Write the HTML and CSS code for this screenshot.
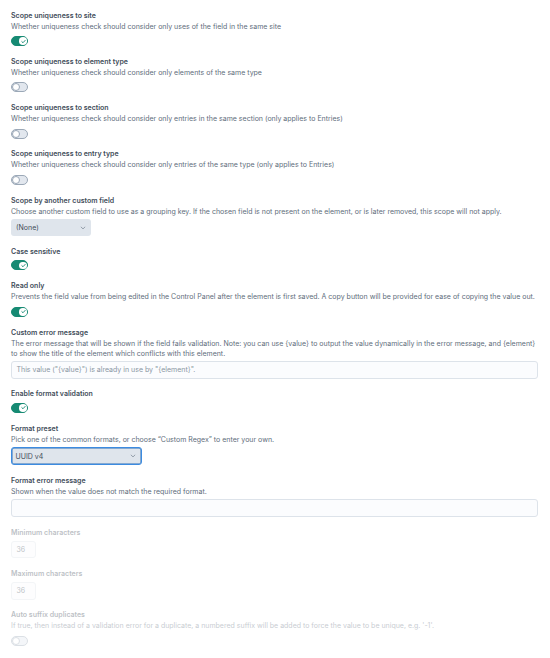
FILE: index.html
```html
<!DOCTYPE html>
<html lang="en">
<head>
<meta charset="utf-8">
<title>Field settings</title>
<link rel="stylesheet" href="styles.css">
</head>
<body>
<div class="page">
  <div class="field">
    <div class="label">Scope uniqueness to site</div>
    <div class="instructions">Whether uniqueness check should consider only uses of the field in the same site</div>
    <span class="toggle on"><span class="knob"><svg viewBox="0 0 10 10"><path d="M2.6 5.2 L4.3 6.8 L7.4 3.4"/></svg></span></span>
  </div>
  <div class="field">
    <div class="label">Scope uniqueness to element type</div>
    <div class="instructions">Whether uniqueness check should consider only elements of the same type</div>
    <span class="toggle"><span class="knob"></span></span>
  </div>
  <div class="field">
    <div class="label">Scope uniqueness to section</div>
    <div class="instructions">Whether uniqueness check should consider only entries in the same section (only applies to Entries)</div>
    <span class="toggle"><span class="knob"></span></span>
  </div>
  <div class="field">
    <div class="label">Scope uniqueness to entry type</div>
    <div class="instructions">Whether uniqueness check should consider only entries of the same type (only applies to Entries)</div>
    <span class="toggle"><span class="knob"></span></span>
  </div>
  <div class="field">
    <div class="label">Scope by another custom field</div>
    <div class="instructions">Choose another custom field to use as a grouping key. If the chosen field is not present on the element, or is later removed, this scope will not apply.</div>
    <div class="select small"><span>(None)</span><svg class="chev" viewBox="0 0 8 8"><path d="M1.5 2.8 L4 5.2 L6.5 2.8"/></svg></div>
  </div>
  <div class="field">
    <div class="label">Case sensitive</div>
    <span class="toggle on"><span class="knob"><svg viewBox="0 0 10 10"><path d="M2.6 5.2 L4.3 6.8 L7.4 3.4"/></svg></span></span>
  </div>
  <div class="field">
    <div class="label">Read only</div>
    <div class="instructions">Prevents the field value from being edited in the Control Panel after the element is first saved. A copy button will be provided for ease of copying the value out.</div>
    <span class="toggle on"><span class="knob"><svg viewBox="0 0 10 10"><path d="M2.6 5.2 L4.3 6.8 L7.4 3.4"/></svg></span></span>
  </div>
  <div class="field">
    <div class="label">Custom error message</div>
    <div class="instructions">The error message that will be shown if the field fails validation. Note: you can use {value} to output the value dynamically in the error message, and {element} to show the title of the element which conflicts with this element.</div>
    <div class="input full"><span class="placeholder">This value ("{value}") is already in use by "{element}".</span></div>
  </div>
  <div class="field">
    <div class="label">Enable format validation</div>
    <span class="toggle on"><span class="knob"><svg viewBox="0 0 10 10"><path d="M2.6 5.2 L4.3 6.8 L7.4 3.4"/></svg></span></span>
  </div>
  <div class="field">
    <div class="label">Format preset</div>
    <div class="instructions">Pick one of the common formats, or choose “Custom Regex” to enter your own.</div>
    <div class="select wide focus"><span>UUID v4</span><svg class="chev" viewBox="0 0 8 8"><path d="M1.5 2.8 L4 5.2 L6.5 2.8"/></svg></div>
  </div>
  <div class="field">
    <div class="label">Format error message</div>
    <div class="instructions">Shown when the value does not match the required format.</div>
    <div class="input full"></div>
  </div>
  <div class="field disabled">
    <div class="label">Minimum characters</div>
    <div class="input num"><span>36</span></div>
  </div>
  <div class="field disabled">
    <div class="label">Maximum characters</div>
    <div class="input num"><span>36</span></div>
  </div>
  <div class="field disabled">
    <div class="label">Auto suffix duplicates</div>
    <div class="instructions">If true, then instead of a validation error for a duplicate, a numbered suffix will be added to force the value to be unique, e.g. '-1'.</div>
    <span class="toggle"><span class="knob"></span></span>
  </div>
</div>
</body>
</html>
```

FILE: styles.css
```css
html, body {
  margin: 0;
  padding: 0;
  background: #ffffff;
}
body {
  font-family: Inter, "Noto Sans", "Liberation Sans", sans-serif;
  font-size: 7px;
  color: #3f4d5a;
}
.page {
  padding: 10.5px 12px 0 11px;
  width: 527px;
}
.field {
  display: flex;
  flex-direction: column;
  align-items: flex-start;
  margin-bottom: 10.8px;
}
.label {
  font-weight: 600;
  line-height: 10.5px;
  color: #3f4d5a;
}
.instructions {
  line-height: 10px;
  color: #606d7b;
  margin-top: 0.5px;
}
.toggle {
  margin-top: 3px;
  box-sizing: border-box;
  width: 17px;
  height: 10px;
  border-radius: 5px;
  background: #e2e7ee;
  border: 1px solid #9ba8b7;
  display: flex;
  align-items: center;
  justify-content: flex-start;
  padding: 0;
}
.instructions + .toggle {
  margin-top: 4.5px;
}
.toggle .knob {
  box-sizing: border-box;
  width: 8px;
  height: 8px;
  border-radius: 50%;
  background: #ffffff;
  border: 1px solid #9ba8b7;
  display: flex;
  align-items: center;
  justify-content: center;
}
.toggle.on {
  background: #168a73;
  border-color: #168a73;
  justify-content: flex-end;
}
.toggle.on .knob {
  border: none;
  width: 7.5px;
  height: 7.5px;
  margin-right: 0.25px;
}
.toggle .knob svg {
  width: 7px;
  height: 7px;
}
.toggle .knob path {
  fill: none;
  stroke: #168a73;
  stroke-width: 1.3;
  stroke-linecap: round;
  stroke-linejoin: round;
}
.select {
  margin-top: 2.5px;
  box-sizing: border-box;
  height: 17px;
  border-radius: 3px;
  background: #dfe5ec;
  display: flex;
  align-items: center;
  justify-content: space-between;
  padding: 0 5px 0 5px;
  color: #3f4d5a;
}
.select.small { width: 80px; }
.select.wide {
  width: 131px;
  height: 18px;
}
.select.focus {
  border: 1.5px solid #3c8be0;
  box-shadow: inset 0 0 0 0.5px #2a6fb8;
  padding-left: 3.5px;
}
.chev {
  width: 6px;
  height: 6px;
}
.chev path {
  fill: none;
  stroke: #7b8794;
  stroke-width: 1;
  stroke-linecap: round;
  stroke-linejoin: round;
}
.input {
  margin-top: 2.5px;
  box-sizing: border-box;
  height: 17.5px;
  border: 1px solid #dde3ea;
  border-radius: 3px;
  background: #fbfcfe;
  display: flex;
  align-items: center;
  padding: 0 5px 0 4.5px;
  color: #3f4d5a;
}
.input.full { width: 527px; }
.input.num { width: 25px; }
.placeholder { color: #8a96a3; }
.disabled { opacity: 0.35; }
```
